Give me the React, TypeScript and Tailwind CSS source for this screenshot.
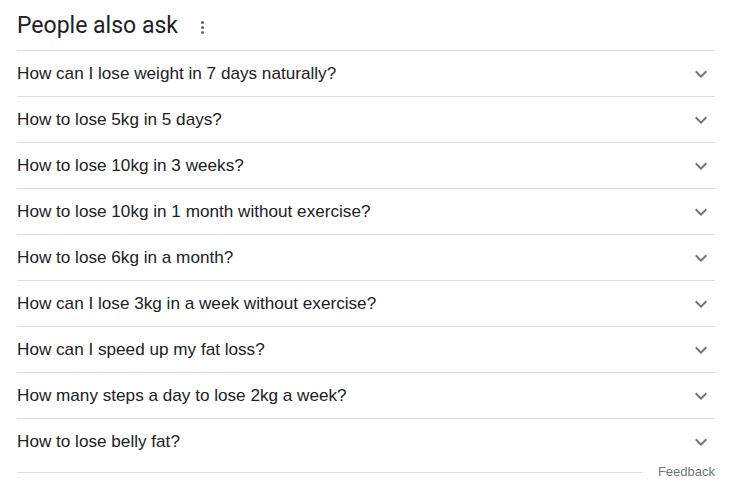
import React from 'react';

const questions = [
  'How can I lose weight in 7 days naturally?',
  'How to lose 5kg in 5 days?',
  'How to lose 10kg in 3 weeks?',
  'How to lose 10kg in 1 month without exercise?',
  'How to lose 6kg in a month?',
  'How can I lose 3kg in a week without exercise?',
  'How can I speed up my fat loss?',
  'How many steps a day to lose 2kg a week?',
  'How to lose belly fat?',
];

const Chevron: React.FC = () => (
  <svg width="24" height="24" viewBox="0 0 24 24" className="fill-[#70757a]">
    <path d="M7.41 8.59L12 13.17l4.59-4.58L18 10l-6 6-6-6 1.41-1.41z" />
  </svg>
);

const App: React.FC = () => {
  return (
    <div className="w-[742px] h-[500px] bg-white font-['Liberation_Sans',Arial,sans-serif] text-[#202124]">
      <div className="ml-[17px] w-[698px]">
        <div className="h-[50px] flex items-center pt-[2px]">
          <h2 className="font-['Roboto',sans-serif] text-[23px] leading-[28px]">People also ask</h2>
          <div className="ml-[23px] flex flex-col items-center gap-[2px] mt-[2px]">
            <span className="block w-[3px] h-[3px] rounded-full bg-[#5f6368]" />
            <span className="block w-[3px] h-[3px] rounded-full bg-[#5f6368]" />
            <span className="block w-[3px] h-[3px] rounded-full bg-[#5f6368]" />
          </div>
        </div>
        <div>
          {questions.map((q) => (
            <div
              key={q}
              className="h-[46px] border-t border-[#dadce0] flex items-center justify-between"
            >
              <span className="text-[17.15px] leading-[22px] mb-[2px]">{q}</span>
              <span className="mr-[2px] flex items-center">
                <Chevron />
              </span>
            </div>
          ))}
        </div>
        <div className="flex items-center gap-[16px]">
          <div className="flex-1 h-px bg-[#dadce0]" />
          <span className="text-[13px] leading-[16px] text-[#70757a]">Feedback</span>
        </div>
      </div>
    </div>
  );
};

export default App;
